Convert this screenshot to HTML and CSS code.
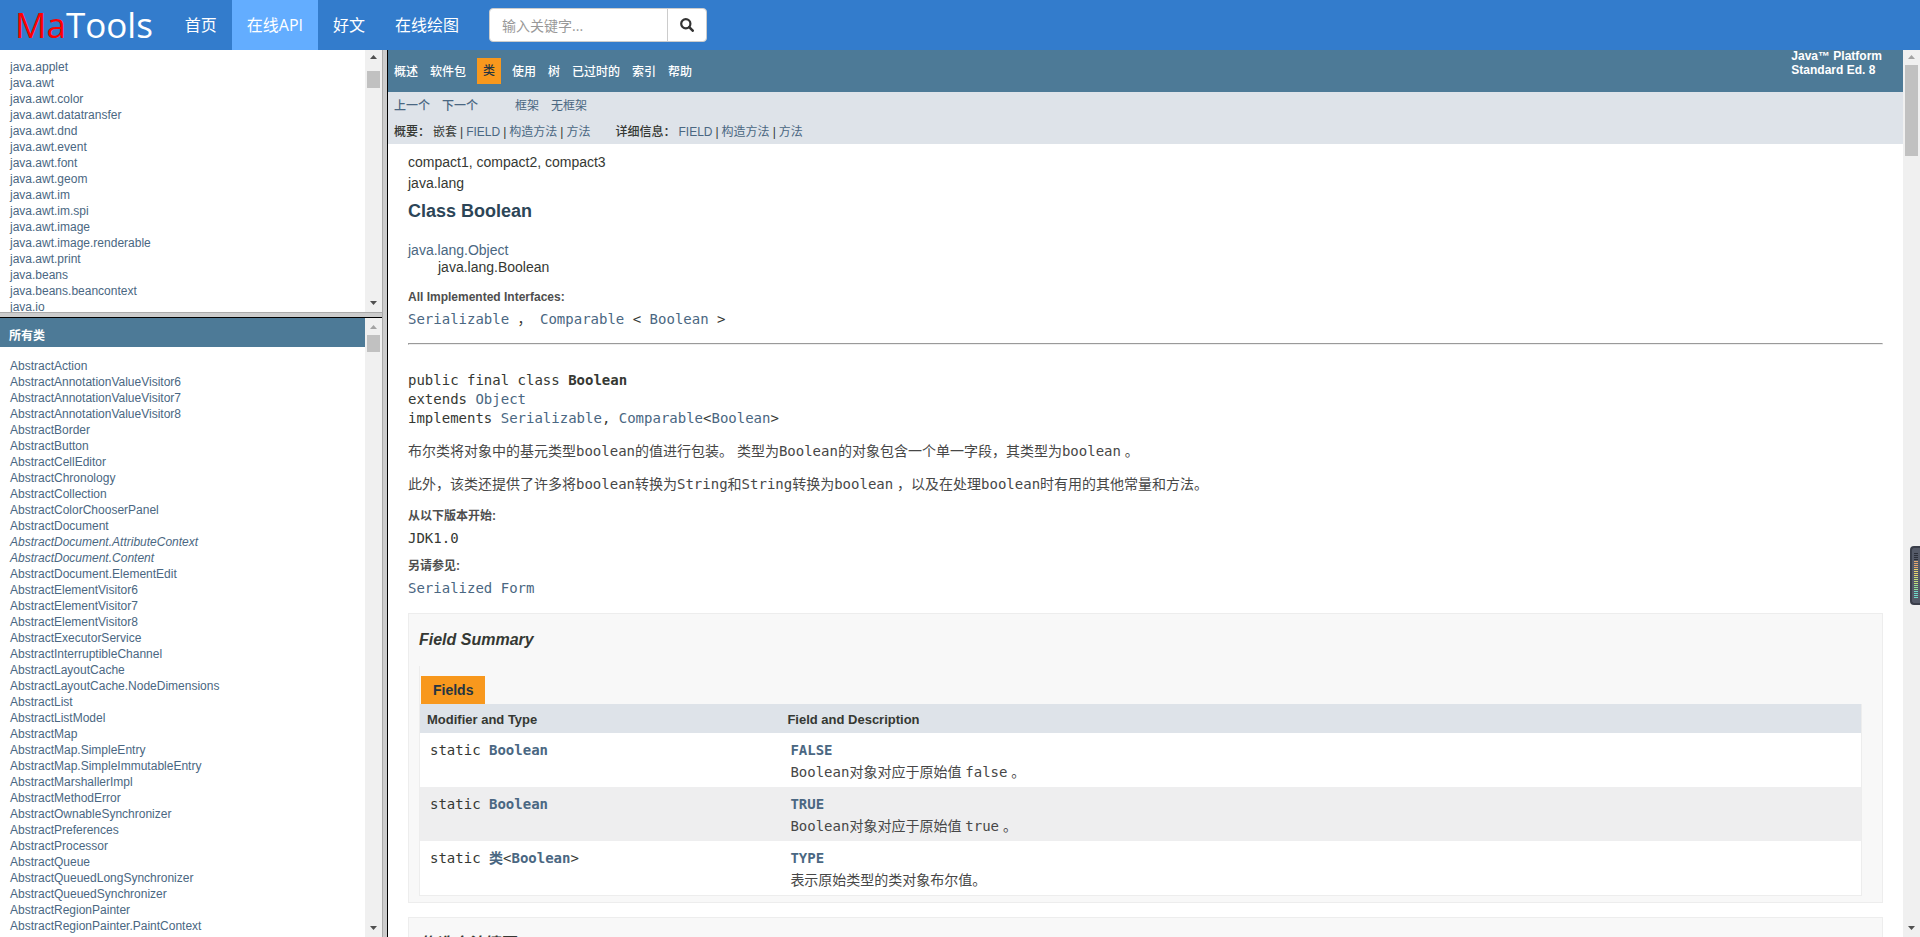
FILE: index.html
```html
<!DOCTYPE html>
<html lang="zh-CN">
<head>
<meta charset="utf-8">
<title>MaTools - Class Boolean</title>
<link rel="stylesheet" href="styles.css">
</head>
<body>
<header class="topbar">
  <a class="logo" href="#"><span class="logo-accent">Ma</span>Tools</a>
  <nav class="menu">
    <a href="#">首页</a>
    <a class="active" href="#">在线API</a>
    <a href="#">好文</a>
    <a href="#">在线绘图</a>
  </nav>
  <form class="search">
    <input type="text" placeholder="输入关键字..." aria-label="输入关键字">
    <button type="button" aria-label="搜索">
      <svg width="14" height="14" viewBox="0 0 14 14"><circle cx="5.8" cy="5.8" r="4.600" fill="none" stroke="#333" stroke-width="2.2"/><path d="M9.200 9.200l3.500 3.500" stroke="#333" stroke-width="2.6" stroke-linecap="round"/></svg>
    </button>
  </form>
</header>
<div class="frames">
  <div class="sidebar">
    <section class="pane packages">
      <ul class="list">
        <li><a href="#">java.applet</a></li>
        <li><a href="#">java.awt</a></li>
        <li><a href="#">java.awt.color</a></li>
        <li><a href="#">java.awt.datatransfer</a></li>
        <li><a href="#">java.awt.dnd</a></li>
        <li><a href="#">java.awt.event</a></li>
        <li><a href="#">java.awt.font</a></li>
        <li><a href="#">java.awt.geom</a></li>
        <li><a href="#">java.awt.im</a></li>
        <li><a href="#">java.awt.im.spi</a></li>
        <li><a href="#">java.awt.image</a></li>
        <li><a href="#">java.awt.image.renderable</a></li>
        <li><a href="#">java.awt.print</a></li>
        <li><a href="#">java.beans</a></li>
        <li><a href="#">java.beans.beancontext</a></li>
        <li><a href="#">java.io</a></li>
      </ul>
      <div class="scrollbar" aria-hidden="true">
        <svg class="arrow" width="17" height="17" viewBox="0 0 17 17"><path d="M5 9h7L8.500 5z"/></svg>
        <div class="track"><div class="thumb thumb-scrolled"></div></div>
        <svg class="arrow" width="17" height="17" viewBox="0 0 17 17"><path d="M5 6h7L8.500 10z"/></svg>
      </div>
    </section>
    <section class="pane classes">
      <div class="pane-body">
        <h2 class="pane-title">所有类</h2>
        <ul class="list">
          <li><a href="#">AbstractAction</a></li>
          <li><a href="#">AbstractAnnotationValueVisitor6</a></li>
          <li><a href="#">AbstractAnnotationValueVisitor7</a></li>
          <li><a href="#">AbstractAnnotationValueVisitor8</a></li>
          <li><a href="#">AbstractBorder</a></li>
          <li><a href="#">AbstractButton</a></li>
          <li><a href="#">AbstractCellEditor</a></li>
          <li><a href="#">AbstractChronology</a></li>
          <li><a href="#">AbstractCollection</a></li>
          <li><a href="#">AbstractColorChooserPanel</a></li>
          <li><a href="#">AbstractDocument</a></li>
          <li><a href="#"><i>AbstractDocument.AttributeContext</i></a></li>
          <li><a href="#"><i>AbstractDocument.Content</i></a></li>
          <li><a href="#">AbstractDocument.ElementEdit</a></li>
          <li><a href="#">AbstractElementVisitor6</a></li>
          <li><a href="#">AbstractElementVisitor7</a></li>
          <li><a href="#">AbstractElementVisitor8</a></li>
          <li><a href="#">AbstractExecutorService</a></li>
          <li><a href="#">AbstractInterruptibleChannel</a></li>
          <li><a href="#">AbstractLayoutCache</a></li>
          <li><a href="#">AbstractLayoutCache.NodeDimensions</a></li>
          <li><a href="#">AbstractList</a></li>
          <li><a href="#">AbstractListModel</a></li>
          <li><a href="#">AbstractMap</a></li>
          <li><a href="#">AbstractMap.SimpleEntry</a></li>
          <li><a href="#">AbstractMap.SimpleImmutableEntry</a></li>
          <li><a href="#">AbstractMarshallerImpl</a></li>
          <li><a href="#">AbstractMethodError</a></li>
          <li><a href="#">AbstractOwnableSynchronizer</a></li>
          <li><a href="#">AbstractPreferences</a></li>
          <li><a href="#">AbstractProcessor</a></li>
          <li><a href="#">AbstractQueue</a></li>
          <li><a href="#">AbstractQueuedLongSynchronizer</a></li>
          <li><a href="#">AbstractQueuedSynchronizer</a></li>
          <li><a href="#">AbstractRegionPainter</a></li>
          <li><a href="#">AbstractRegionPainter.PaintContext</a></li>
        </ul>
      </div>
      <div class="scrollbar" aria-hidden="true">
        <svg class="arrow arrow-off" width="17" height="17" viewBox="0 0 17 17"><path d="M5 11h7L8.500 7z"/></svg>
        <div class="track"><div class="thumb"></div></div>
        <svg class="arrow" width="17" height="17" viewBox="0 0 17 17"><path d="M5 6h7L8.500 10z"/></svg>
      </div>
    </section>
  </div>
  <main class="pane doc">
    <div class="pane-body">
      <div class="docnav">
        <nav class="docnav-links">
          <a href="#">概述</a>
          <a href="#">软件包</a>
          <span class="current">类</span>
          <a href="#">使用</a>
          <a href="#">树</a>
          <a href="#">已过时的</a>
          <a href="#">索引</a>
          <a href="#">帮助</a>
        </nav>
        <div class="edition">Java™ Platform<br>Standard Ed. 8</div>
      </div>
      <div class="subnav">
        <div class="subnav-row">
          <div class="group strong"><a href="#">上一个</a><a href="#">下一个</a></div>
          <div class="group"><a href="#">框架</a><a href="#">无框架</a></div>
        </div>
        <div class="subnav-row details">
          <div class="jump"><span class="label">概要：</span><span>嵌套</span><span>|</span><a href="#">FIELD</a><span>|</span><a href="#">构造方法</a><span>|</span><a href="#">方法</a></div>
          <div class="jump"><span class="label">详细信息：</span><a href="#">FIELD</a><span>|</span><a href="#">构造方法</a><span>|</span><a href="#">方法</a></div>
        </div>
      </div>
      <article class="content">
        <div class="subtitle">compact1, compact2, compact3</div>
        <div class="subtitle">java.lang</div>
        <h1>Class Boolean</h1>
        <ul class="inheritance">
          <li><a href="#">java.lang.Object</a></li>
          <li class="child">java.lang.Boolean</li>
        </ul>
        <dl>
          <dt>All Implemented Interfaces:</dt>
          <dd><a href="#">Serializable</a> ， <a href="#">Comparable</a> &lt; <a href="#">Boolean</a> &gt;</dd>
        </dl>
        <hr>
        <pre class="signature">public final class <b>Boolean</b>
extends <a href="#">Object</a>
implements <a href="#">Serializable</a>, <a href="#">Comparable</a>&lt;<a href="#">Boolean</a>&gt;</pre>
        <p>布尔类将对象中的基元类型<code>boolean</code>的值进行包装。 类型为<code>Boolean</code>的对象包含一个单一字段，其类型为<code>boolean</code> 。</p>
        <p>此外，该类还提供了许多将<code>boolean</code>转换为<code>String</code>和<code>String</code>转换为<code>boolean</code> ，以及在处理<code>boolean</code>时有用的其他常量和方法。</p>
        <dl class="notes">
          <dt>从以下版本开始:</dt>
          <dd>JDK1.0</dd>
          <dt>另请参见:</dt>
          <dd><a href="#">Serialized Form</a></dd>
        </dl>
        <section class="summary">
          <h3>Field Summary</h3>
          <div class="members">
            <div class="tab">Fields</div>
            <table>
              <thead><tr><th>Modifier and Type</th><th>Field and Description</th></tr></thead>
              <tbody>
                <tr><td>static <a href="#">Boolean</a></td><td><a href="#">FALSE</a><div class="desc"><code>Boolean</code>对象对应于原始值 <code>false</code> 。</div></td></tr>
                <tr><td>static <a href="#">Boolean</a></td><td><a href="#">TRUE</a><div class="desc"><code>Boolean</code>对象对应于原始值 <code>true</code> 。</div></td></tr>
                <tr><td>static <a href="#">类</a>&lt;<a href="#">Boolean</a>&gt;</td><td><a href="#">TYPE</a><div class="desc">表示原始类型的类对象布尔值。</div></td></tr>
              </tbody>
            </table>
          </div>
        </section>
        <section class="summary">
          <h3>构造方法摘要</h3>
        </section>
      </article>
    </div>
    <div class="scrollbar" aria-hidden="true">
      <svg class="arrow arrow-off" width="17" height="15" viewBox="0 0 17 15"><path d="M5 9h7L8.500 5z"/></svg>
      <div class="track"><div class="thumb thumb-long"></div></div>
      <svg class="arrow" width="17" height="17" viewBox="0 0 17 17"><path d="M5 6h7L8.500 10z"/></svg>
    </div>
  </main>
</div>
<div class="meter" aria-hidden="true">
  <svg width="4" height="46" viewBox="0 0 4 46">
    <g stroke-width="4" stroke-dasharray="1 1" fill="none">
      <path d="M2 0V8" stroke="#2b2e38"/>
      <path d="M2 8V16" stroke="#e5a86e"/>
      <path d="M2 16V24" stroke="#e8d66e"/>
      <path d="M2 24V32" stroke="#c5e07a"/>
      <path d="M2 32V38" stroke="#94e096"/>
      <path d="M2 38V46" stroke="#6fdcc8"/>
    </g>
  </svg>
</div>
</body>
</html>
```

FILE: styles.css
```css
* { box-sizing: border-box; }

body {
  margin: 0;
  height: 100vh;
  display: flex;
  flex-direction: column;
  overflow: hidden;
  background: #fff;
  color: #353833;
  font: 14px/20px "Liberation Sans", Arial, "Noto Sans CJK SC", sans-serif;
}

a { color: #4a6782; text-decoration: none; }
ul, dl, dd, h1, h2, h3, p, pre { margin: 0; padding: 0; }
ul { list-style: none; }

/* top bar */
.topbar {
  flex: none;
  height: 50px;
  display: flex;
  align-items: center;
  background: #337ccc;
}
.logo {
  padding: 0 17px 0 15px;
  color: #fff;
  font: 35px/50px "Open Sans", "Noto Sans", sans-serif;
}
.logo-accent { color: #f00; }
.menu { display: flex; margin-right: 15px; }
.menu a {
  padding: 0 15px;
  color: #fff;
  font: 16px/50px "Open Sans", "Noto Sans CJK SC", sans-serif;
}
.menu .active { background: #63adff; }
.search { display: flex; height: 34px; }
.search input {
  width: 179px;
  padding: 0 12px;
  border: 1px solid #ccc;
  border-radius: 4px 0 0 4px;
  background: #fff;
  font: 14px "Open Sans", "Noto Sans CJK SC", sans-serif;
}
.search input::placeholder { color: #999; }
.search button {
  width: 40px;
  margin-left: -1px;
  padding: 0;
  display: flex;
  align-items: center;
  justify-content: center;
  border: 1px solid #ccc;
  border-radius: 0 4px 4px 0;
  background: #fff;
}

/* frames */
.frames { flex: 1; min-height: 0; display: flex; background: #ccc; }
.sidebar {
  width: 383px;
  flex: none;
  display: flex;
  flex-direction: column;
  border-right: 1px solid #aaa;
}
.pane { display: flex; min-height: 0; overflow: hidden; background: #fff; }
.pane-body { flex: 1; min-width: 0; overflow: hidden; }
.packages { flex: 30 1 0; margin-bottom: 5px; box-shadow: 0 1px #aaa; }
.classes { flex: 71 1 0; border-top: 1px solid #000; }
.doc {
  flex: 1;
  min-width: 0;
  margin-left: 4px;
  border-left: 1px solid #000;
}

.list { padding-left: 10px; font-size: 12px; line-height: 16px; }
.packages .list { flex: 1; padding-top: 9px; }
.classes .list { padding-top: 11px; }
.pane-title {
  height: 29px;
  padding: 3px 9px 0;
  background: #4d7a97;
  color: #fff;
  font-size: 12px;
  line-height: 30px;
}

/* scrollbars */
.scrollbar {
  flex: none;
  width: 17px;
  display: flex;
  flex-direction: column;
  background: #f0f0f0;
}
.arrow { flex: none; fill: #505050; }
.arrow-off { fill: #a3a3a3; }
.track { flex: 1; padding: 0 2px; }
.thumb { height: 17px; background: #c1c1c1; }
.thumb-scrolled { margin-top: 4px; }
.thumb-long { height: 91px; }

/* document navigation */
.docnav {
  height: 42px;
  display: flex;
  justify-content: space-between;
  background: #4d7a97;
  color: #fff;
  font-size: 12px;
}
.docnav-links { display: flex; align-items: center; gap: 11px; padding-left: 6px; }
.docnav-links a { padding-top: 2px; color: #fff; font-weight: 500; }
.docnav-links a + a { padding-left: 1px; }
.current {
  padding: 1px 6px 0;
  background: #f8981d;
  color: #253441;
  font-weight: 500;
  line-height: 25px;
}
.edition { margin-top: -1px; padding-right: 21px; font-weight: bold; line-height: 14px; }
.subnav {
  height: 52px;
  padding: 4px 6px;
  background: #dee3e9;
  font-size: 12px;
  line-height: 20px;
}
.subnav-row { display: flex; gap: 37px; }
.details { gap: 25px; padding-top: 6px; }
.group { display: flex; gap: 12px; }
.jump { display: flex; gap: 3px; }
.strong, .label { font-weight: 500; }

/* content */
.content { padding: 8px 20px 0; }
.subtitle { line-height: 21px; }
h1 {
  padding: 5px 0 7px;
  color: #2c4557;
  font-size: 18px;
  line-height: 24px;
}
.inheritance { padding: 12px 0 11px; line-height: 17px; }
.child { padding-left: 30px; }
dt {
  color: #4e4e4e;
  font-size: 12px;
  font-weight: bold;
  line-height: 20px;
}
dd, .signature, code, td {
  font-family: "DejaVu Sans Mono", "Noto Sans CJK SC", monospace;
  font-size: 14px;
}
dd { padding: 1px 0 7px; line-height: 22px; }
hr { margin: 6px 0 26px; border: 1px inset #eee; }
.signature { line-height: 19px; }
p, .desc {
  color: #474747;
  font-family: "Liberation Sans", Arial, "Noto Sans CJK SC", sans-serif;
}
p { padding-top: 13px; line-height: 20px; }
.notes { padding-top: 12px; }

.summary {
  margin-bottom: 14px;
  padding: 16px 20px 6px 10px;
  border: 1px solid #ededed;
  background: #f8f8f8;
}
.notes + .summary { margin-top: 7px; }
h3 { font-size: 16px; font-style: italic; line-height: 20px; }
.members {
  margin-top: 16px;
  padding-top: 10px;
  border-left: 1px solid #ededed;
}
.tab {
  width: fit-content;
  margin-left: 1px;
  padding: 0 12px;
  background: #f8981d;
  color: #253441;
  font-weight: bold;
  line-height: 28px;
}
table {
  width: 100%;
  border-collapse: collapse;
  table-layout: fixed;
  background: #fff;
  border-right: 1px solid #ededed;
  border-bottom: 1px solid #ededed;
}
th {
  height: 29px;
  padding: 3px 7px 0;
  background: #dee3e9;
  font-size: 13px;
  line-height: 26px;
  text-align: left;
}
th:first-child { width: 25%; }
td { padding: 6px 10px 4px; line-height: 22px; vertical-align: top; }
td a { font-weight: bold; }
tbody tr:nth-child(even) { background: #eeeeef; }

/* level meter overlaid on the window edge */
.meter {
  position: absolute;
  top: 546px;
  right: 0;
  width: 10px;
  height: 59px;
  display: flex;
  padding: 5px 2px;
  border: 2px solid #3a3e4a;
  border-right: 0;
  border-radius: 4px 0 0 4px;
  background: #555a68;
}
```
